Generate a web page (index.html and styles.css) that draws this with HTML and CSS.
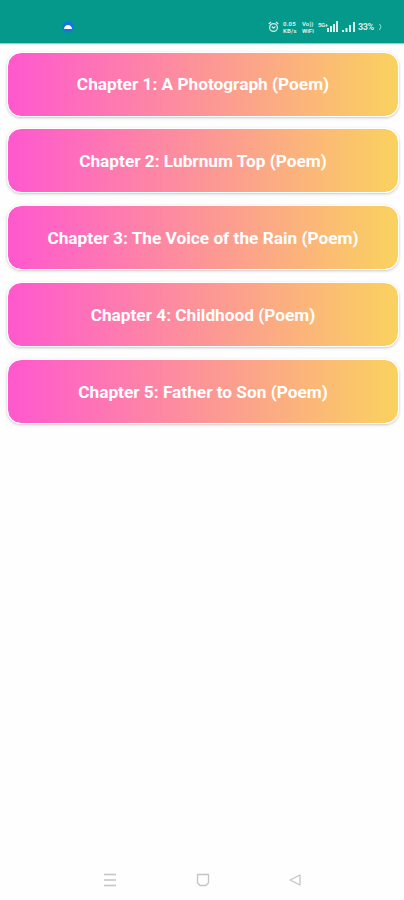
FILE: index.html
```
<!DOCTYPE html>
<html lang="en">
<head>
    <meta charset="UTF-8">
    <meta name="viewport" content="width=device-width, initial-scale=1.0">
    <title>Chapters</title>
    <link rel="stylesheet" href="styles.css">
</head>
<body>
    <div class="status-bar">
        <svg class="app-icon" width="12" height="12" viewBox="0 0 12 12">
            <circle cx="6" cy="6" r="5.5" fill="#1473e6"/>
            <path d="M2 8C2.3 5.6 3.8 4 6 4s3.7 1.6 4 4z" fill="#fff"/>
        </svg>
        <div class="status-icons">
            <svg class="alarm" width="11" height="12" viewBox="0 0 11 12" fill="none" stroke="#d5efeb" stroke-width="1.2">
                <circle cx="5.5" cy="6.5" r="3.9"/>
                <path d="M.7 3L3 1M10.3 3L8 1M3.8 5.5l1.7 1.6 2-1.6"/>
            </svg>
            <div class="stack speed"><span>0.05</span><span>KB/s</span></div>
            <div class="stack vo"><span>Vo))</span><span>WiFi</span></div>
            <div class="network">5G+</div>
            <svg class="signal-one" width="11" height="11" viewBox="0 0 11 11" fill="#d5efeb">
                <path d="M0 7h2v4H0zM3 5h2v6H3zM6 3h2v8H6zM9 0h2v11H9z"/>
            </svg>
            <svg class="signal-two" width="13" height="11" viewBox="0 0 13 11" fill="#d5efeb">
                <path d="M0 9h2v2H0zM3.5 7h2v4h-2zM7 4h2v7H7zM11 1h2v10h-2z"/>
            </svg>
            <div class="battery">33%</div>
            <svg class="charge" width="4" height="8" viewBox="0 0 4 8" fill="none" stroke="#a8dcd5">
                <path d="M1.5 1L3 3.5 1.5 7"/>
            </svg>
        </div>
    </div>

    <div class="chapters">
        <div class="chapter">Chapter 1: A Photograph (Poem)</div>
        <div class="chapter">Chapter 2: Lubrnum Top (Poem)</div>
        <div class="chapter">Chapter 3: The Voice of the Rain (Poem)</div>
        <div class="chapter">Chapter 4: Childhood (Poem)</div>
        <div class="chapter">Chapter 5: Father to Son (Poem)</div>
    </div>

    <!-- Android navigation -->
    <div class="nav-bar">
        <svg width="14" height="14" viewBox="0 0 14 14" fill="none" stroke="#c4c4c4" stroke-width="1.3">
            <path d="M1 1.5h12M1 7h12M1 12.5h12"/>
        </svg>
        <svg width="14" height="14" viewBox="0 0 14 14" fill="none" stroke="#c4c4c4" stroke-width="1.3">
            <path d="M1.5 1.5h11v8.2L10 12.5H4L1.5 9.7z" stroke-linejoin="round"/>
        </svg>
        <svg width="14" height="14" viewBox="0 0 14 14" fill="none" stroke="#c4c4c4" stroke-width="1.3">
            <path d="M12 2v10L2 7z" stroke-linejoin="round"/>
        </svg>
    </div>
</body>
</html>
```

FILE: styles.css
```
body {
    font-family: Roboto, sans-serif;
    margin: 0;
    height: 900px;
    display: flex;
    flex-direction: column;
    background-color: #fefefe;
}
.status-bar {
    box-sizing: border-box;
    height: 43px;
    padding: 10px 22px 0 62px;
    display: flex;
    align-items: center;
    justify-content: space-between;
    background-color: #04998b;
    box-shadow: 0 1px 1px rgba(4, 153, 139, 0.45);
}
.status-icons {
    display: flex;
    align-items: center;
    color: #d5efeb;
    font-weight: bold;
}
.stack {
    display: flex;
    flex-direction: column;
    font-size: 6px;
    line-height: 7px;
}
.speed {
    width: 15px;
    margin-left: 4px;
    letter-spacing: 0.2px;
}
.vo {
    width: 12px;
    margin-left: 4px;
}
.network {
    width: 9px;
    margin-left: 4px;
    font-size: 6px;
    line-height: 6px;
    letter-spacing: -0.4px;
    margin-bottom: 4px;
}
.signal-two {
    margin-left: 4px;
}
.battery {
    width: 17px;
    margin-left: 3px;
    font-size: 9px;
    line-height: 10px;
    letter-spacing: -0.4px;
}
.charge {
    margin-left: 3px;
}
.chapters {
    flex: 1;
    display: flex;
    flex-direction: column;
    gap: 11.8px;
    padding: 8.6px 5px 0 7px;
}
.chapter {
    box-sizing: border-box;
    height: 65px;
    padding-top: 0.6px;
    display: flex;
    align-items: center;
    justify-content: center;
    border: 1px solid #fff;
    border-radius: 14px;
    background: linear-gradient(90deg, #ff5acd 2%, #fad25f 100%) padding-box;
    box-shadow: 0 1px 3px rgba(0, 0, 0, 0.22);
    color: #fff;
    font-size: 17.25px;
    font-weight: bold;
}
.nav-bar {
    height: 40px;
    padding: 0 102px 0 103px;
    display: flex;
    align-items: center;
    justify-content: space-between;
}
```
